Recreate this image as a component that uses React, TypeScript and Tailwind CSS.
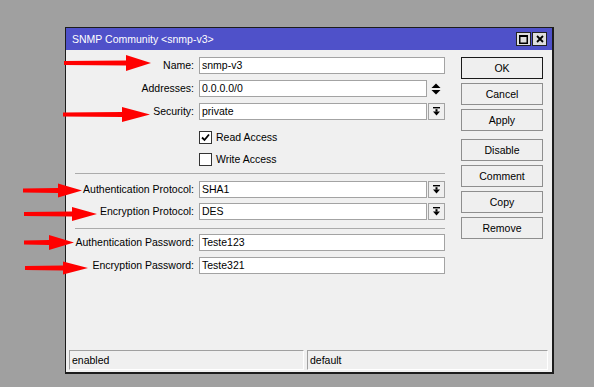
import React from "react";

const font = "font-['Liberation_Sans',Arial,sans-serif]";

function DropIcon() {
  return (
    <svg width="9" height="9" viewBox="0 0 9 9">
      <rect x="1" y="0" width="7" height="1.4" fill="#000" />
      <rect x="3.5" y="2.2" width="2" height="2.4" fill="#000" />
      <polygon points="1,4.4 8,4.4 4.5,8.4" fill="#000" />
    </svg>
  );
}

function Input({ value, w }: { value?: string; w: string }) {
  return (
    <div
      className={`${w} h-[17px] bg-white border border-[#a3a3a3] flex items-center pl-[2px] text-black`}
    >
      {value}
    </div>
  );
}

function Row({
  label,
  mt,
  children,
}: {
  label: string;
  mt: string;
  children: React.ReactNode;
}) {
  return (
    <div className={`flex items-center h-[17px] ${mt}`}>
      <div className="w-[119px] text-right whitespace-nowrap text-black">{label}</div>
      <div className="ml-[5px] flex items-center">{children}</div>
    </div>
  );
}

function Select({ value }: { value: string }) {
  return (
    <>
      <Input value={value} w="w-[228px]" />
      <div className="ml-[1px] w-[17px] h-[17px] border border-[#a3a3a3] bg-[#f0f0f0] flex items-center justify-center">
        <DropIcon />
      </div>
    </>
  );
}

function Check({ label, checked, mt }: { label: string; checked?: boolean; mt: string }) {
  return (
    <div className={`flex items-center h-[17px] ${mt}`}>
      <div className="w-[124px]" />
      <div className="w-[13px] h-[13px] bg-white border border-[#333] flex items-center justify-center">
        {checked && (
          <svg width="9" height="9" viewBox="0 0 9 9">
            <path d="M1 4.5 L3.5 7 L8 1.5" stroke="#000" strokeWidth="1.8" fill="none" />
          </svg>
        )}
      </div>
      <span className="ml-[4px] text-black">{label}</span>
    </div>
  );
}

function Btn({ label, def, mt }: { label: string; def?: boolean; mt?: string }) {
  return (
    <div
      className={`h-[22px] w-[82px] bg-[#efefef] flex items-center justify-center text-black border ${
        def ? "border-[#1a1a1a]" : "border-[#8e8e8e]"
      } ${mt ?? ""}`}
    >
      {label}
    </div>
  );
}

const arrows = [
  { x0: 64, y: 63, xh: 126, xt: 151, h: 8 },
  { x0: 63, y: 114.5, xh: 122, xt: 150, h: 7.5 },
  { x0: 23, y: 190.5, xh: 58, xt: 82, h: 7 },
  { x0: 24, y: 214, xh: 72, xt: 97, h: 7 },
  { x0: 24, y: 242.5, xh: 49, xt: 74, h: 7.5 },
  { x0: 25, y: 268, xh: 63, xt: 88, h: 6.5 },
];

export default function App() {
  return (
    <div className={`relative w-[594px] h-[387px] bg-[#a0a0a0] overflow-hidden ${font} text-[10.5px] leading-none`}>
      <div className="pt-[27px] pl-[65px]">
        <div className="w-[489px] h-[347px] bg-[#f0f0f0] border-l border-t border-r-2 border-b-2 border-[#1c1c1c] flex flex-col">
          {/* title bar */}
          <div className="h-[22px] bg-[#4f51c9] flex items-center pl-[6px] pr-[5px]">
            <span className="text-white text-[10.5px]">SNMP Community &lt;snmp-v3&gt;</span>
            <div className="ml-auto flex gap-[1px]">
              <div className="w-[15px] h-[14px] bg-[#dedede] border border-[#222] flex items-center justify-center">
                <svg width="9" height="9" viewBox="0 0 9 9">
                  <rect x="0.75" y="0.75" width="7.5" height="7.5" fill="none" stroke="#000" strokeWidth="1.5" />
                  <rect x="0" y="0" width="9" height="2" fill="#000" />
                </svg>
              </div>
              <div className="w-[15px] h-[14px] bg-[#dedede] border border-[#222] flex items-center justify-center">
                <svg width="8" height="8" viewBox="0 0 8 8">
                  <path d="M1 1 L7 7 M7 1 L1 7" stroke="#000" strokeWidth="1.8" />
                </svg>
              </div>
            </div>
          </div>

          {/* content */}
          <div className="flex-1 flex pt-[7px]">
            <div className="pl-[9px] w-[379px] flex flex-col">
              <Row label="Name:" mt="">
                <Input value="snmp-v3" w="w-[246px]" />
              </Row>
              <Row label="Addresses:" mt="mt-[6px]">
                <Input value="0.0.0.0/0" w="w-[228px]" />
                <div className="w-[18px] flex flex-col items-center justify-center gap-[1px]">
                  <svg width="10" height="12" viewBox="0 0 10 12">
                    <polygon points="5,0.5 9.5,5 0.5,5" fill="#000" />
                    <polygon points="0.5,7 9.5,7 5,11.5" fill="#000" />
                  </svg>
                </div>
              </Row>
              <Row label="Security:" mt="mt-[6px]">
                <Select value="private" />
              </Row>
              <Check label="Read Access" checked mt="mt-[9px]" />
              <Check label="Write Access" mt="mt-[5px]" />
              <div className="mt-[5px] h-px w-[370px] bg-[#ababab]" />
              <Row label="Authentication Protocol:" mt="mt-[7px]">
                <Select value="SHA1" />
              </Row>
              <Row label="Encryption Protocol:" mt="mt-[5px]">
                <Select value="DES" />
              </Row>
              <div className="mt-[8px] h-px w-[370px] bg-[#ababab]" />
              <Row label="Authentication Password:" mt="mt-[5px]">
                <Input value="Teste123" w="w-[246px]" />
              </Row>
              <Row label="Encryption Password:" mt="mt-[6px]">
                <Input value="Teste321" w="w-[246px]" />
              </Row>
            </div>
            <div className="ml-[16px] flex flex-col gap-[4px]">
              <Btn label="OK" def />
              <Btn label="Cancel" />
              <Btn label="Apply" />
              <Btn label="Disable" mt="mt-[4px]" />
              <Btn label="Comment" />
              <Btn label="Copy" />
              <Btn label="Remove" />
            </div>
          </div>

          {/* status bar */}
          <div className="flex gap-[3px] pl-[3px] pb-[2px]">
            <div className="w-[235px] h-[20px] border-t border-l border-[#a0a0a0] border-r border-b border-r-white border-b-white flex items-center pl-[2px] text-black">
              enabled
            </div>
            <div className="w-[241px] h-[20px] border-t border-l border-[#a0a0a0] border-r border-b border-r-white border-b-white flex items-center pl-[2px] text-black">
              default
            </div>
          </div>
        </div>
      </div>

      {/* red annotation arrows */}
      <svg className="absolute inset-0 pointer-events-none" width="594" height="387" viewBox="0 0 594 387">
        {arrows.map((a, i) => (
          <polygon
            key={i}
            fill="#ff0000"
            points={`${a.x0},${a.y - 2} ${a.xh},${a.y - 2.6} ${a.xh},${a.y - a.h} ${a.xt},${a.y} ${a.xh},${a.y + a.h} ${a.xh},${a.y + 2.6} ${a.x0},${a.y + 2}`}
          />
        ))}
      </svg>
    </div>
  );
}
